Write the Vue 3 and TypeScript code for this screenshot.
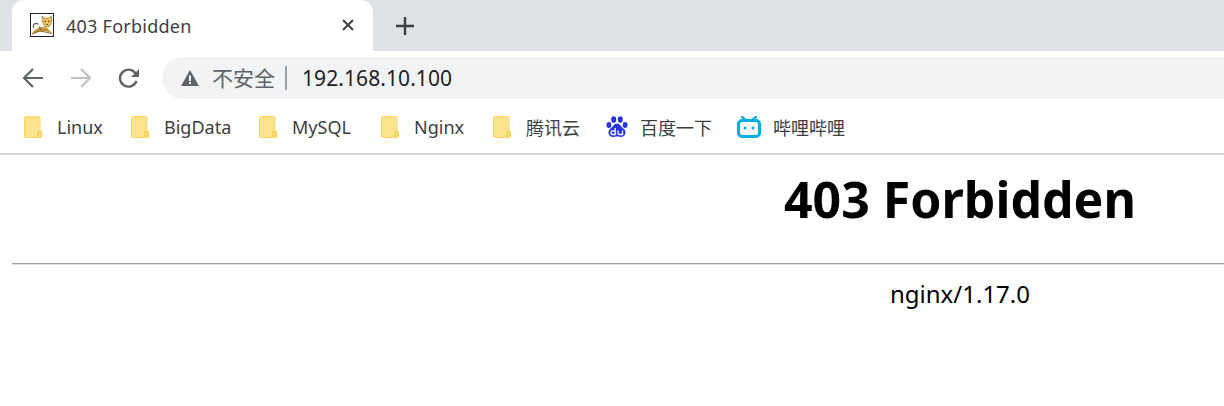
<script setup lang="ts">
const bookmarks = [
  { label: 'Linux', w: 107 },
  { label: 'BigData', w: 128 },
  { label: 'MySQL', w: 122 },
  { label: 'Nginx', w: 112 },
  { label: '腾讯云', w: 113 },
]
</script>

<template>
  <div class="browser">
    <div class="tabstrip">
      <div class="tab">
        <svg class="favicon" width="24" height="24" viewBox="0 0 24 24">
          <rect x="0.5" y="0.5" width="23" height="23" fill="#fff" stroke="#222" />
          <path d="M2 21C4 17 8 14 13 14L17 15L22.500 20.500L17 18.500H10L5 20Z" fill="#c98f2e" />
          <path d="M12 3L14.500 5H19L21.500 3L21.500 9L19 14H15L12.500 9Z" fill="#e8bd5c" stroke="#8a6a24" stroke-width="0.6" />
          <path d="M14.500 8.500H16M18 8.500H19.500M16.500 11.500H18" stroke="#5a4312" stroke-width="1" fill="none" />
          <path d="M3.500 15C2.500 11 6 9 8.500 11.500" fill="none" stroke="#666" stroke-width="1.200" />
          <path d="M9 13.500L11 17" stroke="#666" stroke-width="1.200" fill="none" />
          <path d="M2 21L10 18L22 20.500" fill="none" stroke="#7a5a20" stroke-width="0.8" />
        </svg>
        <span class="tab-title">403 Forbidden</span>
        <svg class="tab-close" width="14" height="14" viewBox="0 0 14 14">
          <path d="M2 2L12 12M12 2L2 12" stroke="#3c4043" stroke-width="2" fill="none" />
        </svg>
      </div>
      <svg class="new-tab" width="18" height="18" viewBox="0 0 18 18">
        <path d="M9 0V18M0 9H18" stroke="#3c4043" stroke-width="2.4" fill="none" />
      </svg>
    </div>

    <div class="toolbar">
      <svg class="nav" width="24" height="24" viewBox="0 0 24 24">
        <path d="M22 12H3M12 3L3 12L12 21" fill="none" stroke="#5f6368" stroke-width="2.2" />
      </svg>
      <svg class="nav fwd" width="24" height="24" viewBox="0 0 24 24">
        <path d="M2 12H21M12 3L21 12L12 21" fill="none" stroke="#bdc1c6" stroke-width="2.2" />
      </svg>
      <svg class="nav reload" width="24" height="24" viewBox="0 0 24 24">
        <path d="M19.5 15A8.5 8.5 0 1 1 18 6.6L21 9.5" fill="none" stroke="#5f6368" stroke-width="2.4" />
        <path d="M22 3V11H14Z" fill="#5f6368" />
      </svg>
      <div class="omnibox">
        <svg class="warn" width="20" height="18" viewBox="0 0 20 18">
          <path d="M10 1L19 17H1Z" fill="#5f6368" />
          <rect x="9" y="6.5" width="2" height="5.5" fill="#f1f3f4" />
          <rect x="9" y="13" width="2" height="2" fill="#f1f3f4" />
        </svg>
        <span class="insecure">不安全</span>
        <span class="sep"></span>
        <span class="url">192.168.10.100</span>
      </div>
    </div>

    <div class="bookmarks">
      <div v-for="b in bookmarks" :key="b.label" class="bm" :style="{ width: b.w + 'px' }">
        <svg class="folder" width="18" height="22" viewBox="0 0 18 22">
          <path d="M2 .5H14.5Q16 .5 16 2V16.5H17.5V20Q17.5 21.5 16 21.5H2Q.5 21.5 .5 20V2Q.5 .5 2 .5Z" fill="#fee38e" stroke="#fbd666" />
          <path d="M14 21V17Q14 15.5 15.7 15.5Q17.4 15.5 17.4 17V21" fill="none" stroke="#f5c842" stroke-width="1.3" />
        </svg>
        <span class="bm-label">{{ b.label }}</span>
      </div>
      <div class="bm baidu">
        <svg class="site" width="22" height="22" viewBox="0 0 22 22">
          <g fill="#2932e1">
            <ellipse cx="7.7" cy="3.6" rx="2.5" ry="3.3" />
            <ellipse cx="14.3" cy="3.6" rx="2.5" ry="3.3" />
            <ellipse cx="2.9" cy="9" rx="2.4" ry="3" />
            <ellipse cx="19.1" cy="9" rx="2.4" ry="3" />
            <path d="M11 7.5C14 7.5 15 11 18 13C20.5 15 20 20.5 15.5 21C13.5 21.2 12.5 20.6 11 20.6C9.5 20.6 8.5 21.2 6.500 21C2 20.5 1.500 15 4 13C7 11 8 7.500 11 7.500Z" />
          </g>
          <path d="M9.200 12V18.500H6.500Q5 18.500 5 16.500Q5 14.800 6.500 14.800H9M12 14.500V17.500Q12 18.500 13.500 18.500H16.500V14.500" fill="none" stroke="#fff" stroke-width="1.3" />
        </svg>
        <span class="bm-label">百度一下</span>
      </div>
      <div class="bm bili">
        <svg class="site" width="24" height="22" viewBox="0 0 24 22">
          <path d="M5 .8L9.500 4.500M19 .8L14.500 4.500" stroke="#00aeec" stroke-width="2.2" fill="none" stroke-linecap="round" />
          <rect x="1.500" y="4.500" width="21" height="16" rx="3.500" fill="#fff" stroke="#00aeec" stroke-width="3" />
          <circle cx="8" cy="12" r="1.500" fill="#00aeec" />
          <circle cx="16" cy="12" r="1.500" fill="#00aeec" />
        </svg>
        <span class="bm-label">哔哩哔哩</span>
      </div>
    </div>

    <main class="page">
      <h1 class="heading">403 Forbidden</h1>
      <hr class="rule" />
      <p class="server">nginx/1.17.0</p>
    </main>
  </div>
</template>

<style>
html, body {
  margin: 0;
  overflow: hidden;
  background: #fff;
}
</style>

<style scoped>
.browser {
  width: 1224px;
  height: 406px;
  overflow: hidden;
  background: #fff;
  font-family: "Noto Sans", "Noto Sans CJK SC", sans-serif;
  color: #000;
}
.tabstrip {
  height: 51px;
  background: #dee1e6;
  display: flex;
  align-items: flex-end;
  padding-left: 12px;
}
.tab {
  width: 361px;
  height: 51px;
  box-sizing: border-box;
  padding: 0 18px;
  background: #fff;
  border-radius: 12px 12px 0 0;
  display: flex;
  align-items: center;
}
.favicon {
  flex: none;
  margin-bottom: 2px;
}
.tab-title {
  margin-left: 12px;
  font-size: 18px;
  letter-spacing: 0.25px;
  color: #3c4043;
  flex: 1;
}
.tab-close {
  flex: none;
  margin-bottom: 2px;
}
.new-tab {
  flex: none;
  margin: 0 0 16px 23px;
}
.toolbar {
  height: 52px;
  box-sizing: border-box;
  padding: 2px 0 0 21px;
  display: flex;
  align-items: center;
}
.nav {
  flex: none;
}
.fwd {
  margin-left: 24px;
}
.reload {
  margin-left: 24px;
}
.omnibox {
  flex: 1;
  margin-left: 21px;
  margin-right: -40px;
  height: 42px;
  background: #f1f3f4;
  border-radius: 21px;
  display: flex;
  align-items: center;
  padding-left: 18px;
}
.warn {
  flex: none;
}
.insecure {
  margin: 0 0 2px 12px;
  font-size: 21px;
  color: #5f6368;
}
.sep {
  width: 2px;
  height: 24px;
  margin-left: 10px;
  background: #9aa0a6;
}
.url {
  margin-left: 15px;
  font-size: 21px;
  letter-spacing: 0.08px;
  color: #202124;
}
.bookmarks {
  height: 52px;
  box-sizing: border-box;
  padding: 0 0 2px 24px;
  display: flex;
  align-items: center;
  border-bottom: 2px solid #d9d9d9;
}
.bm {
  flex: none;
  display: flex;
  align-items: center;
}
.folder {
  flex: none;
  margin-right: 15px;
}
.bm-label {
  font-size: 18px;
  color: #3c4043;
  white-space: nowrap;
}
.baidu {
  width: 131px;
}
.bili {
  width: 130px;
}
.site {
  flex: none;
  margin-right: 12px;
}
.page {
  width: 1896px;
  margin-left: 12px;
}
.heading {
  margin: 0;
  height: 108px;
  padding-top: 10px;
  box-sizing: border-box;
  font-size: 50px;
  line-height: 68px;
  font-weight: 700;
  text-align: center;
}
.rule {
  margin: 0;
  height: 0;
  border: none;
  border-top: 1px solid #a0a0a0;
  border-bottom: 1px solid #e0e0e0;
}
.server {
  margin: 12px 0 0;
  font-size: 24px;
  line-height: 34px;
  text-align: center;
}
</style>
